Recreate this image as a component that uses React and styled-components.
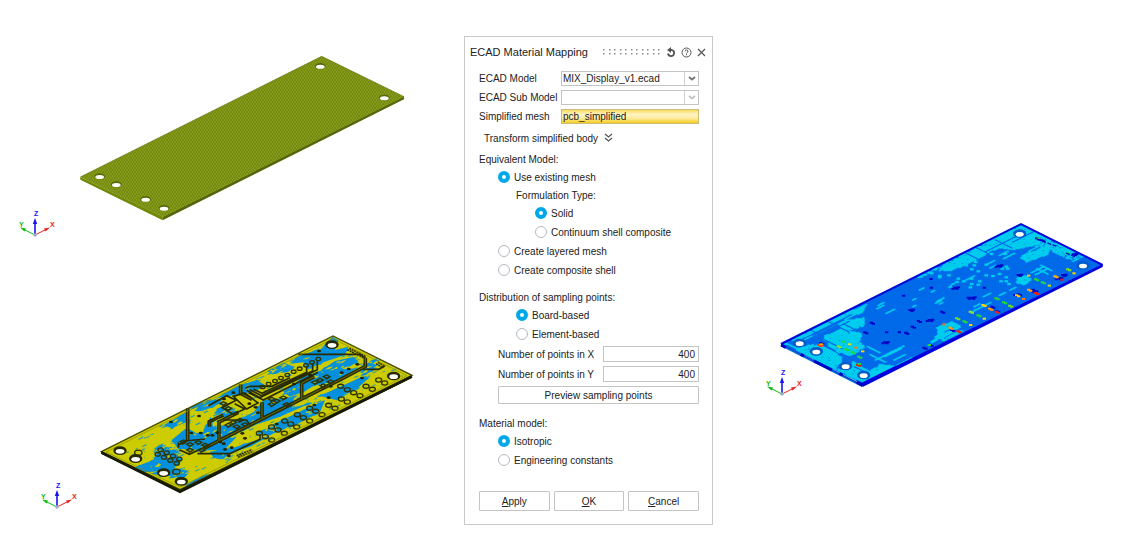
import React, { useState } from "react"
import styled, { createGlobalStyle, css } from "styled-components"

const GlobalStyle = createGlobalStyle`
  * {
    box-sizing: border-box;
  }
  body {
    margin: 0;
    background: #fff;
    color: #222;
    font-family: "Liberation Sans", Arial, sans-serif;
    font-size: 10px;
    line-height: 13px;
  }
`

const Page = styled.main`
  display: grid;
  grid-template-columns: 464fr 249px 409fr;
  align-items: start;
`

const Views = styled.div`
  display: flex;
  flex-direction: column;
  gap: 78px;
  padding-top: ${p => p.$top}px;
`

const Scene = styled.svg`
  display: block;
  width: 100%;
  height: auto;
`

const Dialog = styled.form`
  margin: 36px 0 20px;
  border: 1px solid #c9c9c9;
  background: #fff;
`

const Header = styled.header`
  display: flex;
  align-items: center;
  gap: 4px;
  height: 34px;
  padding: 0 5px;
  padding-bottom: 4px;
`

const Title = styled.h1`
  flex: 1;
  margin: 0;
  font-size: 11px;
  font-weight: normal;
  line-height: 16px;
  white-space: nowrap;
`

const IconButton = styled.button`
  display: flex;
  padding: 0;
  border: 0;
  background: none;
  color: #555;
`

const Body = styled.div`
  padding: 0 13px 13px 14px;
`

const Fields = styled.div`
  display: grid;
  gap: 4px;
`

const Field = styled.div`
  display: grid;
  grid-template-columns: ${p => (p.$wide ? "105px" : "82px")} 1fr;
  align-items: center;
  margin-left: ${p => (p.$wide ? "19px" : "0")};
  white-space: nowrap;
`

const box = css`
  border: 1px solid #c4c4c4;
  background: #fff;
  color: #222;
  font: inherit;
`

const Combo = styled.div`
  ${box}
  display: flex;
  height: 15px;
`

const Select = styled.select`
  flex: 1;
  min-width: 0;
  padding: 0 1px;
  border: 0;
  appearance: none;
  background: none;
  color: inherit;
  font: inherit;
`

const Arrow = styled.span`
  display: flex;
  align-items: center;
  justify-content: center;
  width: 14px;
  border-left: 1px solid #d0d0d0;
  color: ${p => (p.$off ? "#c4c4c4" : "#777")};
`

const Picked = styled.input`
  ${box}
  width: 100%;
  height: 15px;
  padding: 0 1px;
  border-color: #cdbb78;
  background: linear-gradient(#f9dc62, #fff4c4 35%, #fdeb9c 65%, #f6cb1c);
`

const NumberBox = styled.input`
  ${box}
  width: 100%;
  height: 16px;
  padding: 0 3px;
  text-align: right;
`

const Expander = styled.button`
  display: flex;
  align-items: center;
  gap: 6px;
  height: 18px;
  margin: 5px 0 3px 5px;
  padding: 0;
  border: 0;
  background: none;
  color: inherit;
  font: inherit;
`

const Group = styled.div`
  margin-bottom: 9px;
`

const Line = styled.div`
  display: flex;
  align-items: center;
  height: 18px;
  padding-left: ${p => p.$indent || 0}px;
`

const RadioLine = styled.label`
  display: flex;
  align-items: center;
  gap: 4px;
  height: 18px;
  padding-left: ${p => p.$indent}px;
  & + & {
    margin-top: 1px;
  }
`

const Radio = styled.input`
  appearance: none;
  width: 12px;
  height: 12px;
  margin: 0;
  border: 1px solid #b4b8c2;
  border-radius: 50%;
  background: #fff;
  &:checked {
    border: 4px solid #00a8ea;
  }
`

const Points = styled(Fields)`
  margin: 3px 0 10px;
`

const Button = styled.button`
  ${box}
  height: ${p => (p.$indent ? 18 : 20)}px;
  margin-left: ${p => p.$indent || 0}px;
  padding: 0;
  border-radius: 1px;
`

const Actions = styled.div`
  display: grid;
  grid-template-columns: repeat(3, 1fr);
  gap: 4px;
  margin-top: 22px;
`

/* ---- drawing helpers: boards are drawn at three times their size ---- */

const random = seed => () => {
  seed = (seed * 16807) % 2147483647
  return seed / 2147483647
}

const points = text => text.split(" ").map(p => p.split(",").map(Number))

const inside = (x, y, poly) => {
  let hit = false
  for (let i = 0, j = poly.length - 1; i < poly.length; j = i++) {
    const [ax, ay] = poly[i]
    const [bx, by] = poly[j]
    if (ay > y !== by > y && x < ((bx - ax) * (y - ay)) / (by - ay) + ax) {
      hit = !hit
    }
  }
  return hit
}

// one mesh cell, seen in the isometric view
const W = 4
const H = 2
const cell = (x, y) => `M${x - W} ${y}l${W}-${H} ${W} ${H}-${W} ${H}z`

const COLS = 180
const ROWS = 61
const cellAt = (c, r) => [37 + (c + r) * W, 387 + (r - c) * H]

const snap = (x, y) => {
  const a = (x - 37) / W
  const b = (y - 387) / H
  return cellAt(Math.round((a - b) / 2), Math.round((a + b) / 2))
}

const cyanAreas = [
  "60,376 130,342 215,300 292,266 278,292 228,312 218,320 150,352 98,380",
  "165,362 215,342 275,355 272,375 240,398 200,392 165,378",
  "52,390 90,398 125,388 165,395 215,425 215,445 190,460 150,440 110,420",
  "175,362 205,378 262,372 285,395 262,412 240,424 205,412 175,392",
  "205,472 230,455 250,440 300,468 330,448 375,452 290,502 250,490",
  "205,318 285,308 280,335 240,345 210,340",
  "500,168 560,135 600,110 640,90 668,98 640,125 590,150 540,168",
  "650,85 745,32 770,38 825,66 800,90 730,105 690,100 660,110",
  "750,128 800,92 840,100 835,118 770,142",
  "738,190 765,180 787,195 762,210 738,203",
  "500,338 545,318 575,332 560,345 520,370 480,385 505,355",
  "515,375 570,345 580,350 520,378",
].map(points)

// x, y, cells, axis
const cyanLines = [
  [300, 420, 12, 1], [315, 435, 15, 0], [345, 425, 13, 0], [290, 395, 10, 1],
  [360, 415, 12, 0], [370, 435, 9, 0], [320, 280, 6, 0], [325, 270, 5, 0],
  [345, 295, 7, 0], [495, 265, 5, 0], [500, 260, 6, 0], [510, 268, 3, 0],
  [590, 195, 7, 0], [605, 290, 15, 0], [610, 275, 5, 0], [640, 245, 6, 0],
  [660, 160, 5, 0], [650, 150, 7, 0], [700, 130, 9, 0], [690, 120, 7, 0],
  [785, 172, 10, 0], [795, 178, 10, 0], [812, 152, 9, 1], [800, 162, 9, 1],
  [690, 240, 5, 0], [720, 225, 5, 0], [850, 92, 10, 1], [862, 88, 12, 1],
  [880, 120, 7, 0], [875, 98, 9, 1], [430, 255, 3, 0], [425, 275, 3, 0],
  [450, 225, 4, 0], [485, 230, 3, 0], [545, 210, 3, 0], [380, 450, 12, 0],
]

// channels left free between the cyan copper areas
const channels = [
  [75, 385, 44, 0], [120, 345, 9, 1], [130, 362, 24, 0],
  [175, 320, 16, 1], [165, 375, 14, 1], [175, 350, 16, 0], [225, 330, 10, 1],
  [215, 415, 22, 1], [250, 455, 12, 1], [590, 115, 9, 1],
  [620, 100, 9, 1], [680, 75, 13, 1], [650, 110, 30, 0],
  [730, 82, 16, 0], [785, 110, 7, 0], [525, 350, 7, 0], [270, 480, 8, 1],
]

const darkSpots = [
  [605, 248, 5], [478, 315, 4], [345, 382, 4], [420, 285, 3], [555, 218, 4],
  [685, 152, 4], [745, 180, 3], [930, 145, 3], [304, 323, 2], [284, 352, 2],
  [445, 318, 2], [427, 335, 2], [407, 353, 2], [388, 352, 1], [350, 352, 1],
  [515, 290, 2], [401, 242, 1], [484, 218, 1], [483, 192, 1], [643, 218, 1],
  [462, 398, 2], [480, 390, 2], [780, 225, 3], [735, 240, 2], [865, 190, 4],
  [878, 180, 3], [790, 230, 3], [680, 288, 2], [665, 275, 2], [745, 238, 2],
  [800, 70, 2], [910, 118, 3], [545, 345, 2], [815, 76, 2], [152, 384, 2],
]

const hotSpots = [
  [147, 390, 3, "#f23b10"], [153, 388, 1, "#ffb000"], [263, 449, 2, "#d81c00"],
  [268, 447, 1, "#20d838"], [222, 380, 1, "#20d838"], [205, 394, 2, "#8be020"],
  [228, 403, 2, "#20d838"], [247, 412, 2, "#20d838"], [258, 398, 1, "#ff7a10"],
  [278, 409, 1, "#ffd000"], [239, 388, 1, "#e8e020"], [266, 425, 2, "#20d838"],
  [522, 328, 1, "#ff6a10"], [540, 338, 2, "#ffa010"], [564, 349, 2, "#f02010"],
  [560, 310, 2, "#70e020"], [582, 319, 2, "#20d838"], [602, 330, 1, "#ffd000"],
  [601, 290, 2, "#9be020"], [624, 301, 2, "#20d838"], [643, 311, 1, "#e0e020"],
  [639, 270, 2, "#ffd000"], [659, 281, 2, "#ff9a10"], [679, 290, 2, "#f02010"],
  [678, 250, 2, "#20d838"], [701, 262, 2, "#20d838"], [719, 272, 2, "#70e020"],
  [740, 241, 2, "#ffd000"], [761, 252, 1, "#ff7a10"], [776, 224, 2, "#ffb000"],
  [796, 234, 2, "#f02010"], [776, 182, 1, "#ffd000"], [797, 193, 2, "#20d838"],
  [817, 202, 2, "#20d838"], [838, 212, 1, "#c0e020"], [855, 184, 2, "#ffb000"],
  [876, 194, 1, "#e81818"], [893, 163, 2, "#80e020"], [912, 175, 1, "#ffd000"],
  [805, 70, 1, "#20d838"], [892, 115, 1, "#20d838"], [478, 390, 1, "#20d838"],
]

const run = (x, y, n, axis) => {
  const [sx, sy] = snap(x, y)
  let d = ""
  for (let i = 0; i < n; i++) {
    d += cell(sx + i * W, sy + i * (axis ? H : -H))
  }
  return d
}

// spots are drawn as short bars so that they stay readable at this size
const spot = (x, y, n) => {
  const steps = [[0, 0], [6, 3], [10, -1], [-6, 3], [-10, 0]]
  return steps
    .slice(0, n)
    .map(([a, b]) => `M${x + a - 5} ${y + b - 3}h10v6h-10z`)
    .join("")
}

const cyanCells = () => {
  const next = random(41)
  let d = ""
  for (let c = 1; c < COLS - 1; c++) {
    for (let r = 1; r < ROWS - 2; r++) {
      const [x, y] = cellAt(c, r)
      const roll = next()
      const copper = cyanAreas.some(p => inside(x, y, p))
      const rim = (r < 3 && c > 100) || (c > 170 && r < 48) || c < 3
      if ((copper && roll < 0.97) || (rim && roll < 0.7)) {
        d += cell(x, y)
      }
      if (x > 480 && x < 720 && y < 225 && roll < 0.022) {
        d += spot(x, y, 1)
      }
    }
  }
  return d + cyanLines.map(l => run(...l)).join("")
}

const blueAreas = [
  "700,62 728,36 745,46 735,75 775,65 765,90 700,112 655,132 640,112 600,116 622,95 665,80",
  "690,138 735,108 790,96 806,112 760,128 720,148",
  "535,138 580,113 612,125 590,140 545,146",
  "580,200 640,155 690,138 712,158 650,195 600,215",
  "380,220 440,184 500,165 530,184 480,202 420,212",
  "450,282 490,262 520,226 612,215 606,248 660,235 570,275 500,298 450,322 400,340 395,312",
  "222,300 290,262 285,292 245,310",
  "245,345 290,308 320,325 370,314 390,345 440,335 400,378 330,372 265,372",
  "340,315 362,275 372,315 400,300 440,315 420,350 350,352",
  "135,426 190,405 205,376 240,380 275,400 268,420 220,438 160,442",
  "180,446 240,428 300,438 280,458",
  "190,380 205,362 250,370 262,385 225,385",
  "360,380 430,368 545,330 480,365 420,385 400,402 370,398",
  "296,246 350,228 400,222 380,240 330,258",
  "826,112 862,100 850,135 820,152",
  "545,300 640,255 705,225 690,262 600,308",
  "690,212 800,163 842,152 800,192 740,226",
  "286,480 340,452 378,448 330,478",
  "640,160 720,136 800,130 740,168 660,185",
  "500,325 560,300 590,308 540,330",
].concat("380,252 410,238 440,262 420,280 392,268")

const streaks = (areas, seed, count, inner) => {
  const next = random(seed)
  let d = ""
  areas.map(points).forEach(poly => {
    const xs = poly.map(p => p[0])
    const ys = poly.map(p => p[1])
    const left = Math.min(...xs)
    const top = Math.min(...ys)
    for (let i = 0; i < count; i++) {
      const x = left + next() * (Math.max(...xs) - left)
      const y = top + next() * (Math.max(...ys) - top)
      const w = (inner ? 5 : 12) + next() * 22
      const slope = 0.25 + next() * 0.4
      const h = 1 + next() * 3
      if (inside(x, y, poly)) {
        d += `M${x - w / 2} ${y + (w / 2) * slope}L${x} ${y - h}L${x + w / 2} ${y -
          (w / 2) * slope}L${x + 2} ${y + h}z`
      }
    }
  })
  return d
}

// loose specks of clearance over the whole board
const specks = seed => {
  const next = random(seed)
  let d = ""
  for (let i = 0; i < 260; i++) {
    const u = 0.03 + next() * 0.94
    const v = 0.04 + next() * 0.92
    const x = 36 + u * 694 + v * 237
    const y = 380 - u * 347 + v * 114
    const w = 2 + next() * 12
    d += `M${x} ${y}l${w}-${w / 2}l${w / 3} 2l-${w} ${w / 2}z`
  }
  return d
}

const pads = [
  [145, 383, 11], [259, 440, 11], [212, 374, 8], [230, 383, 8], [249, 393, 8],
  [268, 402, 8], [203, 388, 8], [222, 397, 8], [241, 406, 8], [260, 415, 8],
  [508, 325, 9], [526, 335, 9], [545, 345, 9], [545, 306, 9], [564, 315, 9],
  [583, 325, 9], [584, 288, 9], [602, 297, 9], [620, 306, 9], [622, 269, 9],
  [640, 278, 9], [659, 288, 9], [659, 250, 9], [677, 259, 9], [696, 269, 9],
  [716, 241, 9], [735, 250, 9], [754, 222, 9], [772, 231, 9], [752, 184, 9],
  [772, 194, 9], [791, 203, 9], [810, 212, 9], [828, 184, 9], [847, 193, 9],
  [866, 165, 9], [884, 174, 9], [685, 102, 7], [666, 112, 7], [648, 121, 7],
  [629, 131, 7], [611, 140, 7], [592, 150, 7], [573, 159, 7], [555, 168, 7],
  [536, 177, 7], [518, 186, 7],
]

const vias = [
  [243, 291], [327, 273], [304, 324], [332, 324], [367, 331], [402, 222],
  [430, 203], [405, 373], [425, 368], [416, 392], [465, 340], [457, 325],
  [478, 236], [504, 263], [560, 297], [612, 177], [673, 240], [716, 218],
  [776, 132], [802, 118], [816, 159], [687, 78], [755, 143], [497, 247],
  [382, 323], [391, 351], [401, 356], [353, 331], [660, 150], [722, 184],
]

const chips = [
  [300, 358], [325, 352], [345, 360], [300, 375], [430, 292], [450, 285],
  [465, 298], [415, 300], [400, 235], [415, 250], [560, 228],
  [580, 218], [590, 238], [545, 238], [690, 165], [710, 155], [722, 170],
  [700, 182], [675, 172], [545, 222], [335, 375], [440, 305], [280, 350],
]

const traces = [
  "M268 374l30 14 60-28", "M322 386H420L510 343V328",
  "M625 88H808l18 10", "M466 190l12-6H545L600 158",
  "M470 196l40 22L682 134V108", "M480 194l34 18L668 138V116",
  "M490 192l26 13L650 142V124", "M476 203l44 22L684 142",
  "M355 242l55-30 28 14-42 22 34 20 34-16-30-16",
  "M430 214l34-10 40 30-34 18z", "M355 305V288l44-20M361 305V291l40-18",
  "M820 133H866l18-10", "M265 360l20-12 60-6M265 352v16", "M400 285l70 0 10 16",
]

// wide tracks: two dark edges with an olive core
const tracks = [
  "M293 250V346", "M387 346V291l58-29", "M516 280V232", "M635 219V174l38-19",
  "M452 178V205l34 18", "M342 370L515 282 640 219 745 167 826 124V98",
]

function Holes({ at, ring, thick, small }) {
  return at.map(([x, y]) => (
    <g key={x}>
      <ellipse cx={x} cy={y} rx={thick ? 20 : 16} ry={thick ? 13 : 9} fill={ring} />
      <ellipse cx={x} cy={y + 2} rx={small ? 12 : 13} ry={thick ? 7 : 6} fill="#fff" />
    </g>
  ))
}

function Mesh({ id, color, width }) {
  return (
    <pattern
      id={id}
      width="1"
      height="1"
      patternUnits="userSpaceOnUse"
      patternTransform="matrix(4 -2 4 2 33 387)"
    >
      <path d="M0 0H1M0 0V1" stroke={color} strokeWidth={width} />
    </pattern>
  )
}

function Triad({ x, y }) {
  return (
    <g
      transform={`translate(${x} ${y})`}
      fontFamily="Liberation Sans, Arial, sans-serif"
      fontSize="7"
      fontWeight="bold"
    >
      <path d="M0 0V-12" stroke="#1414f0" strokeWidth="1.6" />
      <path d="M-2.2-11L0-17l2.2 6z" fill="#1414f0" />
      <path d="M0 0L11-5.500" stroke="#f02020" />
      <path d="M9-6.500L15-7.500l-4.500 4z" fill="#f02020" />
      <path d="M0 0L-11-5.500" stroke="#10b810" />
      <path d="M-9-6.500L-15-7.500l4.500 4z" fill="#10b810" />
      <circle r="1.800" fill="#9ab0c8" />
      <text x="-1" y="-19" fill="#1414f0">Z</text>
      <text x="15" y="-8" fill="#f02020">X</text>
      <text x="-16" y="-8" fill="#10b810">Y</text>
    </g>
  )
}

function SolidBoard() {
  return (
    <Scene viewBox="0 48 464 200" role="img" aria-label="Simplified mesh">
      <defs>
        <Mesh id="mesh-green" color="#4c5c08" width=".34" />
      </defs>
      <g transform="translate(70 45) scale(.33333)">
        <path d="M31 396L278 515v11L31 404z" fill="#718805" />
        <path d="M278 515L1002 154v9L278 526z" fill="#56660b" />
        <path d="M31 396L755 34l247 121L278 516z" fill="#93ab1b" />
        <path d="M31 396L755 34l247 121L278 516z" fill="url(#mesh-green)" />
        <path d="M31 396L755 34l247 121" fill="none" stroke="#667607" strokeWidth="2" />
        <Holes
          ring="#566705"
          at={[[751, 63], [943, 158], [89, 394], [139, 418], [227, 462], [282, 489]]}
        />
      </g>
      <Triad x={35} y={235} />
    </Scene>
  )
}

function CopperBoard() {
  return (
    <Scene viewBox="0 326 464 196" role="img" aria-label="ECAD board">
      <defs>
        <clipPath id="copper">
          <path d="M34 378L729 32l237 118L270 494z" />
        </clipPath>
      </defs>
      <g transform="translate(90 325) scale(.33333)">
        <path d="M34 378L270 492 966 150v9L270 505 34 387z" fill="#151800" />
        <g clipPath="url(#copper)">
          <path d="M34 378L729 32l237 118L270 494z" fill="#cccc00" />
          <g fill="#0490dc">
            {blueAreas.map(p => (
              <polygon key={p} points={p} />
            ))}
            <path d={streaks(blueAreas, 17, 70)} />
            <path d={specks(83)} opacity=".75" />
          </g>
          <path d={streaks(blueAreas, 29, 12, true)} fill="#c8cc08" />
        </g>
        <path d={tracks.join("")} fill="none" stroke="#2a2b00" strokeWidth="11" />
        <path d={tracks.join("")} fill="none" stroke="#6b6c06" strokeWidth="3" />
        <path d={traces.join("")} fill="none" stroke="#2a2b00" strokeWidth="5" />
        <g fill="none" stroke="#303200" strokeWidth="4">
          {pads.map(([x, y, r]) => (
            <ellipse key={`${x} ${y}`} cx={x} cy={y} rx={r} ry={r * 0.7} />
          ))}
          {chips.map(([x, y]) => (
            <path key={`${x} ${y}`} d={`M${x - 10} ${y}l10-5 10 5-10 5zM${x - 4} ${y + 8}l12-6`} />
          ))}
          <path d="M772 74l50 25M778 70l50 25M858 116l22 12M864 112l22 12M440 392l46-18M444 397l46-18" strokeWidth="5" strokeDasharray="6 2" />
        </g>
        <g fill="#222400">
          {vias.map(([x, y]) => (
            <ellipse key={`${x} ${y}`} cx={x} cy={y} rx="6" ry="4" />
          ))}
        </g>
        <path d="M34 380L729 33l237 118L270 494z" fill="none" stroke="#4b4d00" strokeWidth="4" />
        <path d="M48 381L729 41l222 111L270 486z" fill="none" stroke="#8b8c00" strokeWidth="2" />
        <path d="M34 382L270 498 966 154" fill="none" stroke="#181b04" strokeWidth="7" />
        <Holes
          thick
          ring="#252800"
          at={[[726, 59], [911, 153], [90, 377], [137, 401], [221, 443], [274, 469]]}
        />
      </g>
      <Triad x={57} y={507} />
    </Scene>
  )
}

function MappedBoard() {
  return (
    <Scene viewBox="713 216 409 190" role="img" aria-label="Mapped material">
      <defs>
        <Mesh id="mesh-blue" color="#0050b8" width=".12" />
      </defs>
      <g transform="translate(770 215) scale(.33333)">
        <path d="M33 387L276 508v8L33 394z" fill="#0068d8" />
        <path d="M33 387L753 26l245 123L276 506z" fill="#006cf0" />
        <path d={cyanCells()} fill="#00dcf4" stroke="#00dcf4" />
        <path d={channels.map(c => run(...c)).join("")} fill="#006cf0" />
        <path d="M33 387L753 26l245 123L276 506z" fill="url(#mesh-blue)" />
        <path d={darkSpots.map(s => spot(...s)).join("")} fill="#0008c8" />
        {hotSpots.map(([x, y, n, color]) => (
          <path key={`${x} ${y}`} d={spot(x, y, n)} fill={color} />
        ))}
        <path d="M800 72l60 22M888 114l28 12" stroke="#0008c8" strokeWidth="4" strokeDasharray="12 5" />
        <path d="M33 387L753 27l245 123" fill="none" stroke="#0008d8" strokeWidth="6" />
        <path d="M274 504L998 147v9L278 516z" fill="#0000dc" />
        <path d="M33 387L276 510" stroke="#0038d8" strokeWidth="3" />
        <path d="M33 390l14 7M92 418l10 5M132 438l54 27M208 475l10 5M260 501l18 10" stroke="#0000c0" strokeWidth="9" />
        <Holes
          thick
          small
          ring="#005cc8"
          at={[[749, 56], [939, 151], [89, 384], [139, 409], [227, 453], [281, 480]]}
        />
      </g>
      <Triad x={782} y={394} />
    </Scene>
  )
}

function Grip() {
  return (
    <svg width="60" height="8" fill="#8a8a8a" aria-hidden="true">
      {Array.from({ length: 11 }, (_, i) => (
        <path key={i} d={`M${1 + Math.round(i * 5.5)} 1h1.500v1.500h-1.500zM${1 + Math.round(i * 5.5)} 5h1.500v1.500h-1.500z`} />
      ))}
    </svg>
  )
}

function Chevron() {
  return (
    <svg width="8" height="6" fill="none" stroke="currentColor" strokeWidth="2" aria-hidden="true">
      <path d="M1 1l3 2.500L7 1" />
    </svg>
  )
}

function Option({ indent, name, value, current, onPick, children }) {
  return (
    <RadioLine $indent={indent}>
      <Radio
        type="radio"
        name={name}
        checked={current === value}
        onChange={() => onPick(value)}
      />
      {children}
    </RadioLine>
  )
}

function MappingDialog() {
  const [model, setModel] = useState("existing")
  const [formulation, setFormulation] = useState("solid")
  const [sampling, setSampling] = useState("board")
  const [material, setMaterial] = useState("isotropic")

  return (
    <Dialog onSubmit={e => e.preventDefault()}>
      <Header>
        <Title>ECAD Material Mapping</Title>
        <Grip />
        <IconButton type="button" aria-label="Reset">
          <svg width="11" height="11" viewBox="0 0 11 11" fill="none" stroke="currentColor">
            <path d="M4 3H6a3.100 3.100 0 1 1-4 3.500" strokeWidth="1.800" />
            <path d="M5 0v6L1 3z" fill="currentColor" stroke="none" />
          </svg>
        </IconButton>
        <IconButton type="button" aria-label="Help">
          <svg width="11" height="11" viewBox="0 0 11 11" fill="none" stroke="currentColor">
            <circle cx="5.500" cy="5.500" r="4.500" />
            <path d="M4 4.300a1.500 1.300 0 1 1 2 1.200q-.5.200-.5 1M5.500 7.300v1" />
          </svg>
        </IconButton>
        <IconButton type="button" aria-label="Close">
          <svg width="11" height="11" viewBox="0 0 11 11" stroke="currentColor">
            <path d="M2 2l7 7M9 2L2 9" strokeWidth="1.200" />
          </svg>
        </IconButton>
      </Header>
      <Body>
        <Fields>
          <Field>
            <label htmlFor="model">ECAD Model</label>
            <Combo>
              <Select id="model">
                <option>MIX_Display_v1.ecad</option>
              </Select>
              <Arrow>
                <Chevron />
              </Arrow>
            </Combo>
          </Field>
          <Field>
            <label htmlFor="submodel">ECAD Sub Model</label>
            <Combo>
              <Select id="submodel" disabled />
              <Arrow $off>
                <Chevron />
              </Arrow>
            </Combo>
          </Field>
          <Field>
            <label htmlFor="mesh">Simplified mesh</label>
            <Picked id="mesh" defaultValue="pcb_simplified" />
          </Field>
        </Fields>
        <Expander type="button">
          Transform simplified body
          <svg width="9" height="10" fill="none" stroke="#555" strokeWidth="1.300" aria-hidden="true">
            <path d="M1 1l3.500 3L8 1M1 5l3.500 3L8 5" />
          </svg>
        </Expander>
        <Group role="group" aria-labelledby="equivalent">
          <Line id="equivalent">Equivalent Model:</Line>
          <Option indent={19} name="model" value="existing" current={model} onPick={setModel}>
            Use existing mesh
          </Option>
          <Line $indent={37}>Formulation Type:</Line>
          <Option indent={56} name="type" value="solid" current={formulation} onPick={setFormulation}>
            Solid
          </Option>
          <Option indent={56} name="type" value="shell" current={formulation} onPick={setFormulation}>
            Continuum shell composite
          </Option>
          <Option indent={19} name="model" value="layered" current={model} onPick={setModel}>
            Create layered mesh
          </Option>
          <Option indent={19} name="model" value="composite" current={model} onPick={setModel}>
            Create composite shell
          </Option>
        </Group>
        <div role="group" aria-labelledby="sampling">
          <Line id="sampling">Distribution of sampling points:</Line>
          <Option indent={37} name="sampling" value="board" current={sampling} onPick={setSampling}>
            Board-based
          </Option>
          <Option indent={37} name="sampling" value="element" current={sampling} onPick={setSampling}>
            Element-based
          </Option>
          <Points>
            <Field $wide>
              <label htmlFor="points-x">Number of points in X</label>
              <NumberBox id="points-x" defaultValue="400" />
            </Field>
            <Field $wide>
              <label htmlFor="points-y">Number of points in Y</label>
              <NumberBox id="points-y" defaultValue="400" />
            </Field>
            <Button type="button" $indent={19}>
              Preview sampling points
            </Button>
          </Points>
        </div>
        <div role="group" aria-labelledby="material">
          <Line id="material">Material model:</Line>
          <Option indent={19} name="material" value="isotropic" current={material} onPick={setMaterial}>
            Isotropic
          </Option>
          <Option indent={19} name="material" value="constants" current={material} onPick={setMaterial}>
            Engineering constants
          </Option>
        </div>
        <Actions>
          <Button type="submit">
            <u>A</u>pply
          </Button>
          <Button type="button">
            <u>O</u>K
          </Button>
          <Button type="button">
            <u>C</u>ancel
          </Button>
        </Actions>
      </Body>
    </Dialog>
  )
}

export default function App() {
  return (
    <>
      <GlobalStyle />
      <Page>
        <Views $top={48}>
          <SolidBoard />
          <CopperBoard />
        </Views>
        <MappingDialog />
        <Views $top={216}>
          <MappedBoard />
        </Views>
      </Page>
    </>
  )
}
